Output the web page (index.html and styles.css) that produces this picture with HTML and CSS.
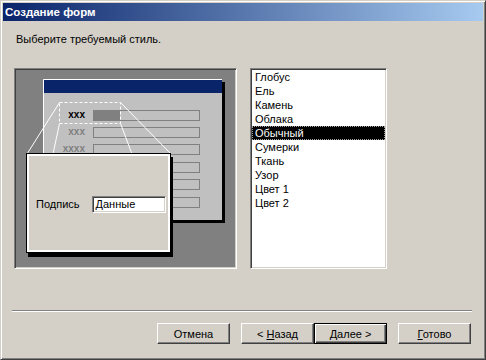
FILE: index.html
```html
<!DOCTYPE html>
<html lang="ru">
<head>
<meta charset="utf-8">
<title>Создание форм</title>
<link rel="stylesheet" href="styles.css">
</head>
<body>
<div class="window">
  <div class="titlebar">Создание форм</div>
  <div class="body">
    <p class="prompt">Выберите требуемый стиль.</p>
    <div class="main">
      <div class="preview">
        <svg class="mock" width="219" height="197" viewBox="0 0 219 197" xmlns="http://www.w3.org/2000/svg">
          <rect x="30" y="12" width="179" height="141" fill="#000"/>
          <rect x="27" y="9" width="179" height="141" fill="#c0c0c0"/>
          <path d="M27.5 150V9.5H206" stroke="#fff" fill="none"/>
          <rect x="28" y="10" width="178" height="13" fill="#0a246a"/>
          <rect x="77" y="40" width="27" height="11" fill="#808080"/>
          <g fill="none" stroke="#808080">
            <rect x="77.5" y="40.5" width="106" height="10"/>
            <rect x="77.5" y="57.5" width="106" height="10"/>
            <rect x="77.5" y="74.5" width="106" height="10"/>
            <rect x="77.5" y="92.5" width="106" height="10"/>
            <rect x="77.5" y="109.5" width="106" height="10"/>
            <rect x="77.5" y="127.5" width="106" height="10"/>
          </g>
          <g font-family="Liberation Sans, Arial, sans-serif" font-weight="bold" font-size="10" text-anchor="end">
            <text x="69" y="48" fill="#000">xxx</text>
            <text x="69" y="65" fill="#808080">xxx</text>
            <text x="69" y="82" fill="#808080">xxxx</text>
          </g>
          <rect x="43.5" y="32.5" width="61" height="21" fill="none" stroke="#fff" stroke-dasharray="3 2"/>
          <g stroke="#fff" fill="none">
            <path d="M43.5 32.5L11 84"/>
            <path d="M43.5 53.5L37 84"/>
            <path d="M104.5 53.5L116 84"/>
            <path d="M104.5 32.5L155 84"/>
          </g>
        </svg>
        <div class="callout">
          <span class="caption">Подпись</span>
          <span class="field">Данные</span>
        </div>
      </div>
      <ul class="list">
        <li>Глобус</li>
        <li>Ель</li>
        <li>Камень</li>
        <li>Облака</li>
        <li class="selected">Обычный</li>
        <li>Сумерки</li>
        <li>Ткань</li>
        <li>Узор</li>
        <li>Цвет 1</li>
        <li>Цвет 2</li>
      </ul>
    </div>
    <div class="sep"></div>
    <div class="buttons">
      <button class="btn">Отмена</button>
      <button class="btn gap">&lt; <u>Н</u>азад</button>
      <button class="btn default"><u>Д</u>алее &gt;</button>
      <button class="btn gap"><u>Г</u>отово</button>
    </div>
  </div>
</div>
</body>
</html>
```
FILE: styles.css
```css
html, body {
  margin: 0;
  padding: 0;
  background: #d4d0c8;
}
body {
  font-family: "Liberation Sans", Arial, sans-serif;
  font-size: 11px;
  color: #000;
}
.window {
  width: 486px;
  height: 360px;
  box-sizing: border-box;
  border: 1px solid;
  border-color: #d4d0c8 #404040 #404040 #d4d0c8;
  box-shadow: inset 1px 1px #fff, inset -1px -1px #808080;
  padding: 2px;
  background: #d4d0c8;
  display: flex;
  flex-direction: column;
}
.titlebar {
  height: 18px;
  line-height: 18px;
  padding-left: 2px;
  color: #fff;
  font-weight: bold;
  font-size: 11.5px;
  background: linear-gradient(to right, #0a246a, #a6caf0);
}
.body {
  padding: 12px 11px 0 11px;
}
.prompt {
  margin: 0 0 22px 2px;
  line-height: 13px;
}
.main {
  display: flex;
  gap: 13px;
  height: 201px;
}
.preview,
.list {
  box-sizing: border-box;
  border: 1px solid;
  border-color: #808080 #fff #fff #808080;
  box-shadow: inset 1px 1px #404040, inset -1px -1px #d4d0c8;
  padding: 1px;
}
.preview {
  width: 223px;
  background: #808080;
  position: relative;
}
.mock {
  display: block;
}
.callout {
  position: absolute;
  left: 11px;
  top: 84px;
  width: 145px;
  height: 100px;
  box-sizing: border-box;
  border: 1px solid #000;
  box-shadow: inset 0 0 0 2px #fff, 2px 4px 0 #000;
  background: #d4d0c8;
  display: flex;
  align-items: center;
  padding: 2px 0 0 9px;
  gap: 12px;
}
.field {
  width: 74px;
  height: 17px;
  box-sizing: border-box;
  border: 1px solid;
  border-color: #808080 #fff #fff #808080;
  box-shadow: inset 1px 1px #404040, inset -1px -1px #d4d0c8;
  background: #fff;
  padding-left: 3px;
  line-height: 15px;
}
.list {
  width: 137px;
  margin: 0;
  list-style: none;
  background: #fff;
}
.list li {
  line-height: 14px;
  height: 14px;
  padding-left: 3px;
}
.list li.selected {
  background: #000;
  color: #fff;
  outline: 1px dotted #a0a0a0;
  outline-offset: -1px;
}
.sep {
  margin: 41px 0 0 -2px;
  width: 460px;
  border-top: 1px solid #808080;
  border-bottom: 1px solid #fff;
}
.buttons {
  display: flex;
  justify-content: flex-end;
  margin: 11px 1px 0 0;
}
.btn {
  width: 73px;
  height: 21px;
  box-sizing: border-box;
  padding: 0;
  border: 1px solid;
  border-color: #fff #404040 #404040 #fff;
  box-shadow: inset -1px -1px #808080;
  background: #d4d0c8;
  font-family: "Liberation Sans", Arial, sans-serif;
  font-size: 11px;
  color: #000;
}
.btn.gap {
  margin-left: 11px;
}
.btn.default {
  border: 1px solid #000;
  box-shadow: inset 1px 1px #fff, inset -1px -1px #404040, inset -2px -2px #808080;
}
```
